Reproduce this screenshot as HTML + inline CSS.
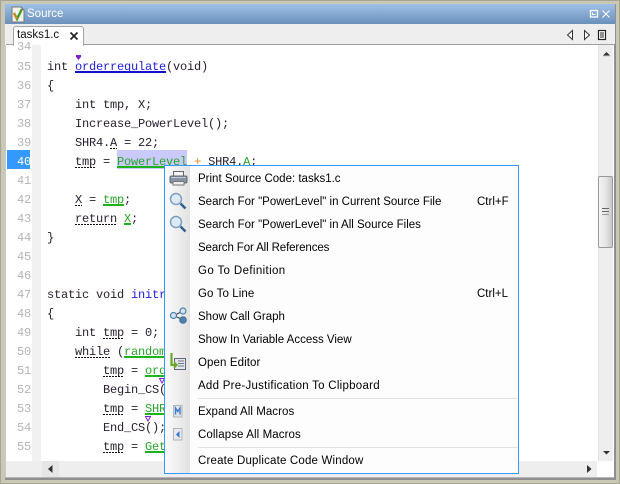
<!DOCTYPE html>
<html><head><meta charset="utf-8">
<style>
html,body{margin:0;padding:0;background:#fff}
#w{position:relative;width:620px;height:484px;overflow:hidden;background:#fff;font-family:"Liberation Sans",sans-serif}
#w div{position:absolute}
.ln{left:8px;width:23px;margin-top:2px;text-align:right;font:12px/19px "Liberation Mono",monospace;letter-spacing:-.2px;color:#b4b4b4;height:19px;white-space:pre}
.c{margin-top:2px;font:12px/19px "Liberation Mono",monospace;letter-spacing:-.2px;color:#2a2030;height:19px;white-space:pre}
.g{color:#2aa52a;background:linear-gradient(#1db31d,#1db31d) 0 calc(100% - 1px)/100% 2px no-repeat}
.d{background:repeating-linear-gradient(90deg,#111 0 2px,transparent 2px 3px) 0 calc(100% - 1px)/100% 1px no-repeat}
.b{color:#2222e0}
.u{color:#2222e0;background:linear-gradient(#1111cc,#1111cc) 0 calc(100% - 1px)/100% 2px no-repeat}
.m{left:198px;margin-top:1px;font-size:11.5px;line-height:23px;height:23px;color:#000;white-space:pre}
.k{left:477px;margin-top:1px;font-size:11.5px;line-height:23px;height:23px;color:#000;white-space:pre}
.sep{left:198px;width:320px;height:1px;background:#e2e2e2}
</style></head><body>
<div id="w">
<!-- frame -->
<div style="left:0;top:0;width:620px;height:484px;background:#a6a592"></div>
<div style="left:1px;top:1px;width:618px;height:482px;background:#c9c8b6"></div>
<div style="left:5px;top:4px;width:611px;height:476px;background:#8f8f8f"></div>
<div style="left:5px;top:4px;width:609px;height:474px;background:#fff"></div>
<div style="left:5px;top:4px;width:610px;height:20px;background:linear-gradient(#a0c0e6,#6a90bb)"></div>
<div style="left:27px;top:4px;height:20px;font-size:11.5px;line-height:21px;color:#fff">Source</div>
<!-- app icon -->
<svg style="position:absolute;left:10px;top:6px" width="16" height="17"><path d="M2 1H11L14 4V16H2Z" fill="#f2f2e8" stroke="#777"/><path d="M4 7L7 13L12 3" fill="none" stroke="#3f9a2a" stroke-width="2.4"/><path d="M4 7L7 13" fill="none" stroke="#d08a20" stroke-width="2"/></svg>
<!-- title icons -->
<svg style="position:absolute;left:589px;top:9px" width="24" height="11"><rect x="1.500" y="1.500" width="7" height="6.500" fill="none" stroke="#fff" stroke-width="1.300"/><path d="M3.500 3.500V5.500H6.500" fill="none" stroke="#fff"/><path d="M13.500 1.500L20.500 8.500M20.500 1.500L13.500 8.500" stroke="#fff" stroke-width="1"/></svg>
<!-- tab bar -->
<div style="left:5px;top:24px;width:610px;height:20px;background:#eeeeee"></div>
<div style="left:6px;top:44px;width:608px;height:1px;background:#a0a0a0"></div>
<div style="left:13px;top:26px;width:69px;height:19px;background:#fff;border:1px solid #a5a5a5;border-bottom:0;border-radius:3px 3px 0 0;box-sizing:content-box"></div>
<div style="left:17px;top:26px;font-size:11.5px;line-height:19px;color:#111">tasks1.c</div>
<svg style="position:absolute;left:69px;top:31px" width="11" height="11"><path d="M1.500 1.500L8.500 8.500M8.500 1.500L1.500 8.500" stroke="#222" stroke-width="1.700"/></svg>
<svg style="position:absolute;left:565px;top:28px" width="45" height="14"><path d="M7.500 2.500V11.500L2.500 7Z" fill="#fff" stroke="#333"/><path d="M19.500 2.500V11.500L24.500 7Z" fill="#fff" stroke="#333"/><rect x="33.500" y="2.500" width="7" height="9" fill="#fff" stroke="#222" stroke-width="1.200"/><path d="M35 5H39M35 7H39M35 9H39" stroke="#222"/></svg>
<!-- gutter -->
<div style="left:5px;top:45px;width:1px;height:432px;background:#c8c8c8"></div>
<div style="left:32px;top:45px;width:9px;height:416px;background:#f1f1f1"></div>
<div style="left:7px;top:150px;width:23px;height:19px;background:#3399ff"></div>
<div class="ln" style="top:36px">34</div>
<div class="ln" style="top:56px">35</div>
<div class="ln" style="top:75px">36</div>
<div class="ln" style="top:94px">37</div>
<div class="ln" style="top:113px">38</div>
<div class="ln" style="top:132px">39</div>
<div class="ln" style="top:151px;color:#fff">40</div>
<div class="ln" style="top:170px">41</div>
<div class="ln" style="top:189px">42</div>
<div class="ln" style="top:208px">43</div>
<div class="ln" style="top:227px">44</div>
<div class="ln" style="top:246px">45</div>
<div class="ln" style="top:265px">46</div>
<div class="ln" style="top:284px">47</div>
<div class="ln" style="top:303px">48</div>
<div class="ln" style="top:322px">49</div>
<div class="ln" style="top:341px">50</div>
<div class="ln" style="top:360px">51</div>
<div class="ln" style="top:379px">52</div>
<div class="ln" style="top:398px">53</div>
<div class="ln" style="top:417px">54</div>
<div class="ln" style="top:436px">55</div>
<div style="left:117px;top:150px;width:70px;height:19px;background:#c9c9fb"></div>
<!-- code -->
<div class="c" style="left:47px;top:56px">int <span class="u">orderregulate</span>(void)</div>
<svg style="position:absolute;left:76px;top:55px" width="6" height="6"><path d="M0 0H5V2L2.500 5L0 2Z" fill="#8020d0"/></svg>
<div class="c" style="left:47px;top:75px">{</div>
<div class="c" style="left:75px;top:94px">int tmp, X;</div>
<div class="c" style="left:75px;top:113px">Increase_PowerLevel();</div>
<div class="c" style="left:75px;top:132px">SHR4.<span class="d">A</span> = 22;</div>
<div class="c" style="left:75px;top:151px"><span class="d">tmp</span> = <span class="g">PowerLevel</span> <span style="color:#e08a20">+</span> SHR4.<span class="g">A</span>;</div>
<div class="c" style="left:75px;top:189px"><span class="d">X</span> = <span class="g">tmp</span>;</div>
<div class="c" style="left:75px;top:208px"><span class="d">return</span> <span class="g">X</span>;</div>
<div class="c" style="left:47px;top:227px">}</div>
<div class="c" style="left:47px;top:284px">static void <span class="b">initr</span></div>
<div class="c" style="left:47px;top:303px">{</div>
<div class="c" style="left:75px;top:322px">int <span class="d">tmp</span> = 0;</div>
<div class="c" style="left:75px;top:341px"><span class="d">while</span> (<span class="g">random</span></div>
<div class="c" style="left:103px;top:360px"><span class="d">tmp</span> = <span class="g">ord</span></div>
<div class="c" style="left:103px;top:379px">Begin_CS(</div>
<div class="c" style="left:103px;top:398px"><span class="d">tmp</span> = <span class="g">SHR</span></div>
<div class="c" style="left:103px;top:417px">End_CS();</div>
<div class="c" style="left:103px;top:436px"><span class="d">tmp</span> = <span class="g">Get</span></div>
<svg style="position:absolute;left:159px;top:378px" width="7" height="6"><path d="M.5 .5H5.500L3 5Z" fill="#fff" stroke="#8020d0"/></svg>
<svg style="position:absolute;left:145px;top:416px" width="7" height="6"><path d="M.5 .5H5.500L3 5Z" fill="#fff" stroke="#8020d0"/></svg>
<!-- v scrollbar -->
<div style="left:598px;top:45px;width:15px;height:416px;background:#eeeeee;border-left:1px solid #e2e2e2;box-sizing:border-box"></div>
<svg style="position:absolute;left:603px;top:52px" width="8" height="5"><path d="M3.500 0L7 3.500H0Z" fill="#333"/><path d="M0 4H7" stroke="#ccc"/></svg>
<div style="left:598px;top:176px;width:15px;height:72px;box-sizing:border-box;border:1px solid #999;border-radius:2px;background:linear-gradient(90deg,#f4f4f4,#e6e6e6 50%,#c8c8c8)"></div>
<div style="left:602px;top:208px;width:7px;height:1px;background:#666;box-shadow:0 3px 0 #666,0 6px 0 #999"></div>
<svg style="position:absolute;left:603px;top:451px" width="8" height="5"><path d="M0 0H7L3.500 3.500Z" fill="#333"/></svg>
<!-- h scrollbar -->
<div style="left:6px;top:461px;width:591px;height:16px;background:#eeeeee"></div>
<div style="left:42px;top:461px;width:17px;height:16px;background:#e6e6e6"></div>
<svg style="position:absolute;left:48px;top:465px" width="6" height="9"><path d="M4.500 0V8L0 4Z" fill="#333"/></svg>
<svg style="position:absolute;left:587px;top:465px" width="6" height="9"><path d="M0 0V8L4.500 4Z" fill="#333"/></svg>
<div style="left:5px;top:477px;width:609px;height:1px;background:#b5b5b5"></div>
<!-- menu -->
<div style="left:164px;top:165px;width:355px;height:309px;box-sizing:border-box;border:1px solid #3399ff;background:#fdfdfd"></div>
<div style="left:165px;top:166px;width:25px;height:307px;background:linear-gradient(90deg,#fbfbfb,#e2e2e2)"></div>
<div class="m" style="top:167px">Print Source Code: tasks1.c</div>
<div class="m" style="top:190px">Search For "PowerLevel" in Current Source File</div>
<div class="k" style="top:190px">Ctrl+F</div>
<div class="m" style="top:213px">Search For "PowerLevel" in All Source Files</div>
<div class="m" style="top:236px;letter-spacing:-.12px">Search For All References</div>
<div class="m" style="top:259px;letter-spacing:.37px">Go To Definition</div>
<div class="m" style="top:282px;letter-spacing:.1px">Go To Line</div>
<div class="k" style="top:282px">Ctrl+L</div>
<div class="m" style="top:305px">Show Call Graph</div>
<div class="m" style="top:328px">Show In Variable Access View</div>
<div class="m" style="top:351px;letter-spacing:.1px">Open Editor</div>
<div class="m" style="top:374px;letter-spacing:.26px">Add Pre-Justification To Clipboard</div>
<div class="sep" style="top:398px"></div>
<div class="m" style="top:400px;letter-spacing:.06px">Expand All Macros</div>
<div class="m" style="top:423px;letter-spacing:.1px">Collapse All Macros</div>
<div class="sep" style="top:447px"></div>
<div class="m" style="top:449px;letter-spacing:.18px">Create Duplicate Code Window</div>
<!-- menu icons -->
<svg style="position:absolute;left:169px;top:170px" width="20" height="18"><rect x="4.500" y="1.500" width="10" height="5" fill="#f4f4f4" stroke="#666"/><rect x="1" y="6" width="17" height="7" rx="1.500" fill="#8593a5" stroke="#5e6875"/><path d="M2 7.500H17" stroke="#c5ccd5"/><rect x="4" y="11.500" width="11" height="3.500" fill="#eee" stroke="#777"/></svg>
<svg style="position:absolute;left:169px;top:192px" width="20" height="19"><circle cx="7" cy="7" r="5.500" fill="#dce9f7" stroke="#7f9fc0" stroke-width="1.500"/><path d="M11.500 11.500L16.500 16.500" stroke="#2f5f8f" stroke-width="2.500"/></svg>
<svg style="position:absolute;left:169px;top:215px" width="20" height="19"><circle cx="7" cy="7" r="5.500" fill="#dce9f7" stroke="#7f9fc0" stroke-width="1.500"/><path d="M11.500 11.500L16.500 16.500" stroke="#2f5f8f" stroke-width="2.500"/></svg>
<svg style="position:absolute;left:169px;top:307px" width="20" height="18"><path d="M5 8.500L14 4M5 8.500L14 13" stroke="#444" fill="none"/><circle cx="4.500" cy="8.500" r="3" fill="#cfe3f5" stroke="#4f7fae" stroke-width="1.200"/><circle cx="14" cy="4" r="3" fill="#cfe3f5" stroke="#4f7fae" stroke-width="1.200"/><circle cx="14" cy="13" r="3.300" fill="#4f7fae" stroke="#3f6f9e"/></svg>
<svg style="position:absolute;left:169px;top:353px" width="20" height="18"><rect x="5.500" y="5.500" width="11" height="11" fill="#dfe6ec" stroke="#667"/><path d="M9 8H15M9 10.500H15M9 13H15" stroke="#778"/><path d="M2.500 0V12H7" fill="none" stroke="#6aa82a" stroke-width="2.200"/><path d="M5 9L8 12L5 15" fill="none" stroke="#6aa82a" stroke-width="1.500"/></svg>
<svg style="position:absolute;left:173px;top:405px" width="10" height="13"><rect x=".5" y=".5" width="8.500" height="11.500" fill="#dde3ec" stroke="#b5b5b5"/><path d="M2.500 9.500V3L4.700 6.500L7 3V9.500" fill="none" stroke="#3a78c8" stroke-width="1.300"/></svg>
<svg style="position:absolute;left:173px;top:428px" width="10" height="13"><rect x=".5" y=".5" width="8.500" height="11.500" fill="#e6e9ee" stroke="#b5b5b5"/><path d="M6.500 3V10L3 6.500Z" fill="#3a78c8"/></svg>
</div>
</body></html>
